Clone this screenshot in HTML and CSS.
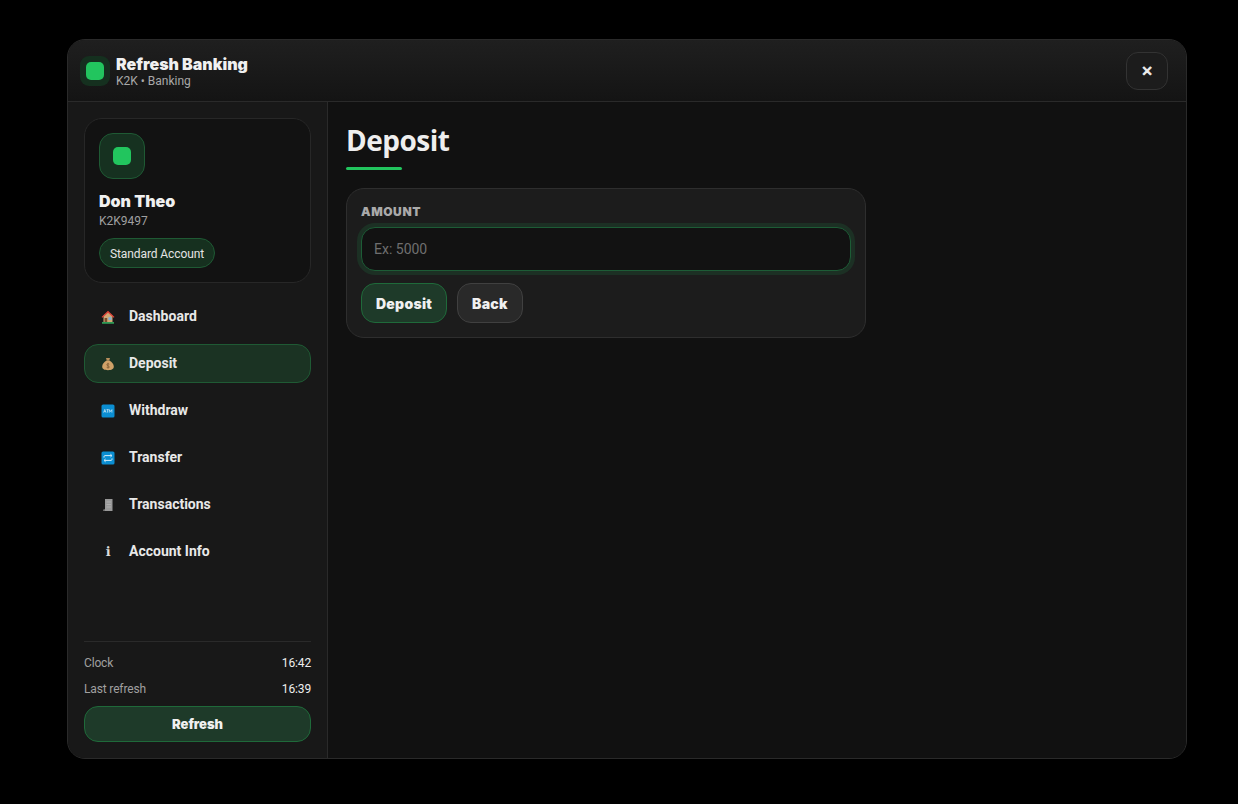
FILE: index.html
```html
<!DOCTYPE html>
<html lang="en">
<head>
<meta charset="utf-8">
<title>Refresh Banking</title>
<link rel="stylesheet" href="styles.css">
</head>
<body>
<div class="window">
  <header class="topbar">
    <div class="brand">
      <div class="brand-logo"><span class="brand-dot"></span></div>
      <div class="brand-text">
        <div class="brand-title">Refresh Banking</div>
        <div class="brand-sub">K2K • Banking</div>
      </div>
    </div>
    <button class="close" type="button">✕</button>
  </header>
  <div class="body">
    <aside class="sidebar">
      <section class="profile">
        <div class="avatar"><span class="avatar-dot"></span></div>
        <div class="profile-name">Don Theo</div>
        <div class="profile-id">K2K9497</div>
        <div class="pill">Standard Account</div>
      </section>
      <nav class="nav">
        <a class="nav-item"><span class="nav-icon"><svg viewBox="0 0 14 14" width="14" height="14"><rect x="1" y="12" width="12" height="1.800" fill="#2f9a55"/><path d="M2.500 5.500 7 2l4.500 3.500V12h-9z" fill="#d0a876"/><path d="M.5 7 7 .8 13.500 7l-1 .8L7 2.800 1.500 7.800z" fill="#dd4339"/><rect x="3.600" y="8" width="2.600" height="4" fill="#7a4a2c"/><rect x="7.400" y="7.200" width="3" height="2.800" fill="#7fb2d6"/></svg></span><span class="nav-label">Dashboard</span></a>
        <a class="nav-item active"><span class="nav-icon"><svg viewBox="0 0 14 14" width="14" height="14"><path d="M5 1h4l-.8 2.400H5.800z" fill="#b98f5c"/><path d="M5.600 3.600h2.800C11 5.200 12.800 7.400 12.800 9.600c0 2.600-2.200 3.600-5.800 3.600S1.200 12.200 1.200 9.600c0-2.200 1.800-4.400 4.400-6z" fill="#d0a268"/><path d="M7 5.800v5.400M8.300 7.200C7.800 6.600 5.800 6.600 5.800 7.800S8.400 8.800 8.400 10 6.200 11 5.600 10.300" fill="none" stroke="#7d5c34" stroke-width=".8"/></svg></span><span class="nav-label">Deposit</span></a>
        <a class="nav-item"><span class="nav-icon"><svg viewBox="0 0 14 14" width="14" height="14"><rect x=".5" y=".5" width="13" height="13" rx="1.600" fill="#0b8ed2"/><path d="M2.600 8.600 3.800 5.400l1.200 3.200M3.100 7.600h1.400M5.500 5.600h2.200M6.600 5.600v3M8.300 8.600V5.600l1.300 2 1.300-2v3" fill="none" stroke="#d5edf9" stroke-width=".7"/></svg></span><span class="nav-label">Withdraw</span></a>
        <a class="nav-item"><span class="nav-icon"><svg viewBox="0 0 14 14" width="14" height="14"><rect x=".5" y=".5" width="13" height="13" rx="1.600" fill="#0b8ed2"/><path d="M3 6.600V5.600c0-.6.4-1 1-1h6.600M9.400 3.200l1.600 1.400-1.600 1.400M11 7.400v1c0 .6-.4 1-1 1H3.400M4.600 8l-1.600 1.400 1.600 1.400" fill="none" stroke="#d5edf9" stroke-width="1"/></svg></span><span class="nav-label">Transfer</span></a>
        <a class="nav-item"><span class="nav-icon"><svg viewBox="0 0 14 14" width="14" height="14"><path d="M4 1h7.500v12H2.500v-1.500H4z" fill="#989898"/><path d="M2.500 11.700H4V13H2.500z" fill="#777"/><path d="M5.500 4h4.500M5.500 6.500h4.500M5.500 9h4.500" stroke="#b2b2b2" stroke-width=".8"/></svg></span><span class="nav-label">Transactions</span></a>
        <a class="nav-item"><span class="nav-icon info">ℹ</span><span class="nav-label">Account Info</span></a>
      </nav>
      <footer class="side-foot">
        <div class="foot-row"><span>Clock</span><strong>16:42</strong></div>
        <div class="foot-row"><span>Last refresh</span><strong>16:39</strong></div>
        <button class="btn btn-green btn-wide" type="button">Refresh</button>
      </footer>
    </aside>
    <main class="main">
      <h1 class="page-title">Deposit</h1>
      <div class="title-rule"></div>
      <section class="card">
        <label class="field-label" for="amount">AMOUNT</label>
        <input class="field" id="amount" type="text" placeholder="Ex: 5000">
        <div class="actions">
          <button class="btn btn-green" type="button">Deposit</button>
          <button class="btn btn-grey" type="button">Back</button>
        </div>
      </section>
    </main>
  </div>
</div>
</body>
</html>
```
FILE: styles.css
```css
* { box-sizing: border-box; }
html, body { height: 100%; }
body {
  margin: 0;
  padding: 0 0 6px 16px;
  background: #000;
  display: flex;
  align-items: center;
  justify-content: center;
  font-family: "Roboto", sans-serif;
  color: #eee;
}
.window {
  width: 1120px;
  height: 720px;
  background: #111;
  border: 1px solid #2a2a2a;
  border-radius: 18px;
  overflow: hidden;
  display: flex;
  flex-direction: column;
}
.topbar {
  height: 62px;
  flex: none;
  display: flex;
  align-items: center;
  justify-content: space-between;
  padding: 0 18px 0 12px;
  background: linear-gradient(#1f1f1f, #141414);
  border-bottom: 1px solid #2a2a2a;
}
.brand { display: flex; align-items: center; gap: 6px; }
.brand-logo {
  width: 30px; height: 30px;
  border-radius: 9px;
  background: #15301f;
  display: flex; align-items: center; justify-content: center;
}
.brand-dot { width: 18px; height: 18px; border-radius: 5px; background: #22c55e; }
.brand-text { padding-top: 2px; }
.brand-title { font-family: "Inter", sans-serif; font-size: 16px; font-weight: 900; line-height: 18px; color: #f0f0f0; }
.brand-sub { font-size: 12px; line-height: 16px; color: #a8a8a8; }
.close {
  width: 42px; height: 38px;
  border-radius: 12px;
  border: 1px solid #333;
  background: #1c1c1c;
  color: #eee;
  font-family: "DejaVu Sans", sans-serif;
  font-size: 14px;
  font-weight: 700;
  -webkit-text-stroke: .8px #eee;
}
.body { flex: 1; display: flex; min-height: 0; }
.sidebar {
  width: 260px;
  flex: none;
  background: #181818;
  border-right: 1px solid #2a2a2a;
  padding: 16px;
  display: flex;
  flex-direction: column;
}
.profile {
  height: 165px;
  background: #121212;
  border: 1px solid #272727;
  border-radius: 18px;
  padding: 14px;
  margin-bottom: 14px;
}
.avatar {
  width: 46px; height: 46px;
  border-radius: 14px;
  background: #163120;
  border: 1px solid #1f5a34;
  display: flex; align-items: center; justify-content: center;
}
.avatar-dot { width: 18px; height: 18px; border-radius: 5px; background: #22c55e; }
.profile-name { font-family: "Inter", sans-serif; font-size: 16px; font-weight: 900; line-height: 18px; margin-top: 13px; color: #f0f0f0; }
.profile-id { font-size: 12px; line-height: 16px; margin-top: 3px; color: #a0a0a0; }
.pill {
  display: inline-block;
  margin-top: 9px;
  height: 30px;
  line-height: 30px;
  padding: 0 10px;
  font-size: 12px;
  letter-spacing: -.1px;
  color: #e4e4e4;
  background: #16301f;
  border: 1px solid #1f5a34;
  border-radius: 15px;
}
.nav { display: flex; flex-direction: column; gap: 8px; }
.nav-item {
  height: 39px;
  display: flex;
  align-items: center;
  gap: 14px;
  padding: 0 16px;
  border: 1px solid transparent;
  border-radius: 14px;
  font-size: 14px;
  font-weight: 700;
  color: #e8e8e8;
}
.nav-item.active { background: #1b3323; border-color: #1f5a34; }
.nav-label { margin-top: -2px; }
.nav-icon { width: 14px; height: 14px; display: flex; align-items: center; justify-content: center; flex: none; }
.info { font-family: "DejaVu Sans", sans-serif; font-size: 13px; color: #ddd; }
.side-foot { margin-top: auto; border-top: 1px solid #2a2a2a; padding-top: 8px; }
.foot-row {
  display: flex;
  justify-content: space-between;
  align-items: center;
  height: 26px;
  font-size: 12px;
  letter-spacing: -.15px;
  color: #a0a0a0;
}
.foot-row strong { font-weight: 400; color: #eee; }
.btn {
  height: 40px;
  border-radius: 14px;
  font-family: "Inter", sans-serif;
  font-size: 14px;
  font-weight: 900;
  letter-spacing: .25px;
  color: #f0f0f0;
  padding: 0 14px;
}
.btn-green { background: #1e3a29; border: 1px solid #1f6a3a; }
.btn-grey { background: #292929; border: 1px solid #404040; }
.btn-wide { width: 100%; height: 36px; margin-top: 4px; font-size: 13px; letter-spacing: 0; }
.main { flex: 1; padding: 18px; background: #111; }
.page-title { margin: 0; font-family: "Open Sans", sans-serif; font-size: 28px; font-weight: 700; letter-spacing: -.5px; line-height: 40px; color: #eee; }
.title-rule { width: 56px; height: 3px; border-radius: 2px; background: #22c55e; margin-top: 7px; }
.card {
  width: 520px;
  height: 150px;
  margin-top: 18px;
  background: #1c1c1c;
  border: 1px solid #2e2e2e;
  border-radius: 18px;
  padding: 14px;
  display: flex;
  flex-direction: column;
  align-items: flex-start;
}
.field-label { font-family: "Inter", sans-serif; font-size: 12px; font-weight: 900; line-height: 18px; letter-spacing: .6px; color: #aaa; }
.field {
  width: 100%;
  height: 44px;
  margin-top: 6px;
  background: #121212;
  border: 1px solid #1d5c36;
  border-radius: 14px;
  box-shadow: 0 0 0 4px #1c3024;
  padding: 0 12px;
  font-family: "Roboto", sans-serif;
  font-size: 14px;
  color: #eee;
  outline: none;
}
.field::placeholder { color: #6f6f6f; opacity: 1; }
.actions { display: flex; gap: 10px; margin-top: 12px; }
```
